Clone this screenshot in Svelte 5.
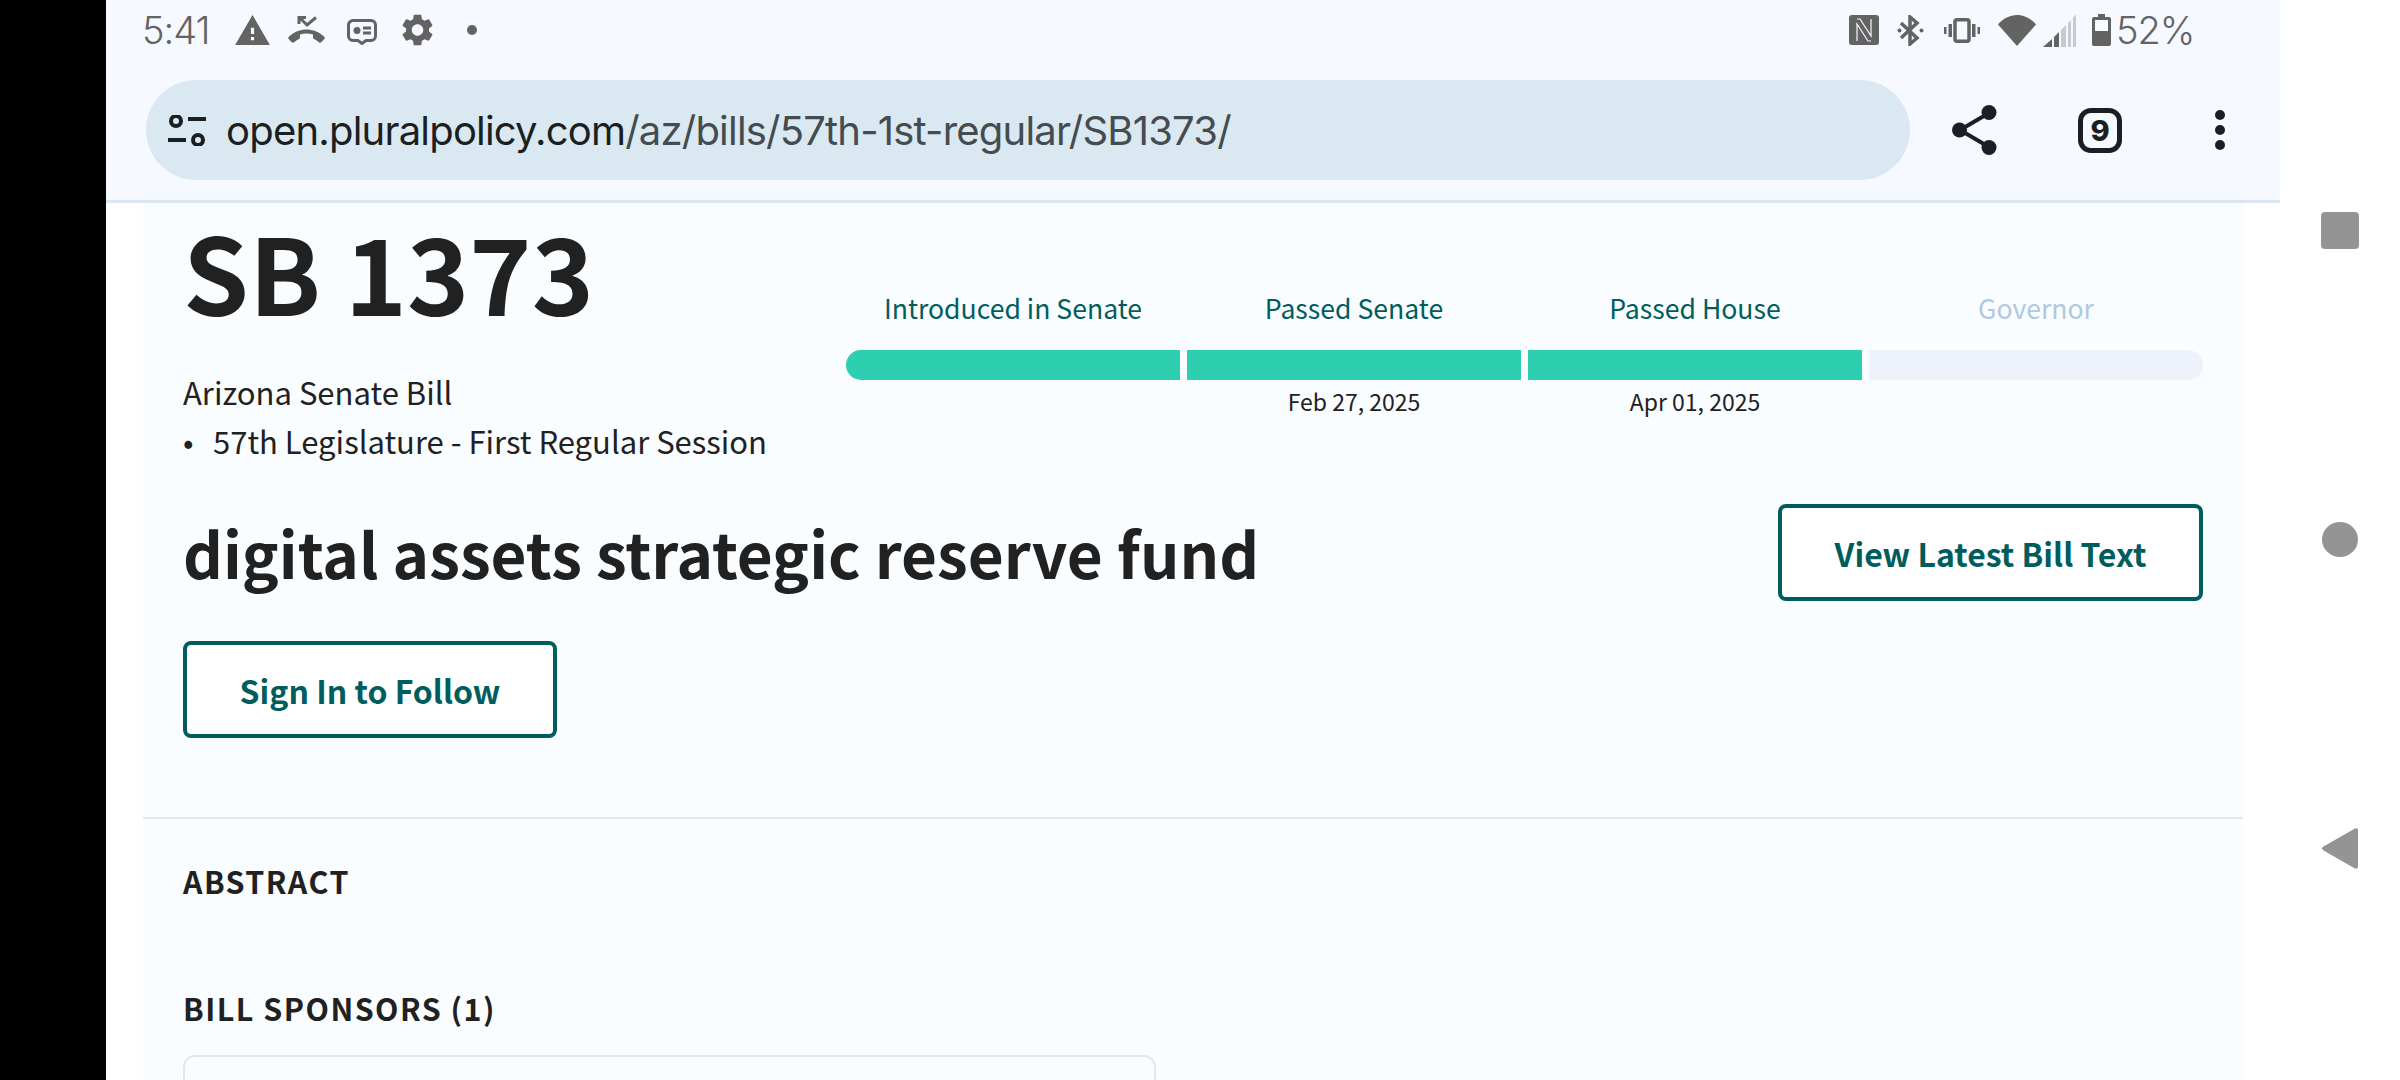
<script>
  const steps = [
    { label: 'Introduced in Senate', date: '', done: true },
    { label: 'Passed Senate', date: 'Feb 27, 2025', done: true },
    { label: 'Passed House', date: 'Apr 01, 2025', done: true },
    { label: 'Governor', date: '', done: false }
  ];
</script>

<div class="screen">
  <div class="bezel"></div>
  <div class="app">
    <header class="chrome">
      <div class="status">
        <span class="clock">5:41</span>
        <svg class="i-warn" viewBox="1 2 22 19"><path d="M1 21h22L12 2 1 21zm12-3h-2v-2h2v2zm0-4h-2v-4h2v4z"/></svg>
        <svg class="i-call" viewBox="0 0 38 28"><path d="M19 13.500C12 13.500 6 16 1 20.500c-1 1-1 2 0 3l2.500 2.500c1 1 2 1 3 0 1.500-1.200 3-2.200 4.500-3 .8-.4 1-1 1-2v-2.500c2-.6 4.300-.9 6.500-.9s4.500.3 6.500.9V21c0 1 .2 1.600 1 2 1.500.8 3 1.800 4.500 3 1 1 2 1 3 0l2.500-2.500c1-1 1-2 0-3-5-4.500-11-7-18-7z"/><path class="line" d="M11 1l8 8L28 1.500M11 8V1.500h7"/></svg>
        <svg class="i-msg" viewBox="0 0 30 26"><path class="line" d="M6 1.500h18a4.500 4.500 0 0 1 4.500 4.500v11a4.500 4.500 0 0 1-4.500 4.500h-5L15 24.500l-4-3H6A4.500 4.500 0 0 1 1.500 17V6A4.500 4.500 0 0 1 6 1.500z"/><circle cx="10" cy="11.500" r="3.500"/><path class="line" d="M16 9h8M16 14h8"/></svg>
        <svg class="i-gear" viewBox="2.400 2 19.200 20"><path d="M19.140 12.940c.04-.3.06-.61.06-.94 0-.32-.02-.64-.07-.94l2.030-1.580c.18-.14.23-.41.12-.61l-1.920-3.320c-.12-.22-.37-.29-.59-.22l-2.390.96c-.5-.38-1.030-.7-1.620-.94l-.36-2.540c-.04-.24-.24-.41-.48-.41h-3.840c-.24 0-.43.17-.47.41l-.36 2.540c-.59.24-1.130.57-1.620.94l-2.390-.96c-.22-.08-.47 0-.59.22L2.740 8.870c-.12.21-.08.47.12.61l2.030 1.580c-.05.3-.09.63-.09.94s.02.64.07.94l-2.030 1.580c-.18.14-.23.41-.12.61l1.920 3.320c.12.22.37.29.59.22l2.390-.96c.5.38 1.030.7 1.620.94l.36 2.540c.05.24.24.41.48.41h3.840c.24 0 .44-.17.47-.41l.36-2.540c.59-.24 1.130-.56 1.620-.94l2.390.96c.22.08.47 0 .59-.22l1.920-3.320c.12-.22.07-.47-.12-.61l-2.010-1.580zM12 15.600c-1.980 0-3.600-1.620-3.600-3.600s1.620-3.600 3.600-3.600 3.600 1.620 3.600 3.600-1.620 3.600-3.600 3.600z"/></svg>
        <span class="dot"></span>
        <span class="spacer"></span>
        <svg class="i-nfc" viewBox="0 0 30 30"><rect width="30" height="30" rx="3"/><path class="nfc-line" d="M8 4h3l11 17V4M22 26h-3L8 9v17"/></svg>
        <svg class="i-bt" viewBox="0 0 27 31"><path class="line thick" d="M4 8l16 15-7 6V2l7 6L4 23"/><circle cx="2.500" cy="15.500" r="2"/><circle cx="24.500" cy="15.500" r="2"/></svg>
        <svg class="i-vib" viewBox="0 0 36 25"><rect class="line thick" x="11" y="1.800" width="14" height="21.400" rx="2"/><rect x="4.500" y="6" width="3.500" height="13"/><rect x="28" y="6" width="3.500" height="13"/><rect x="0" y="9" width="2.500" height="7"/><rect x="33.500" y="9" width="2.500" height="7"/></svg>
        <svg class="i-wifi" viewBox="0 0 38 31"><path d="M19 31L0 9.500C5 3.500 12 0 19 0s14 3.500 19 9.500z"/></svg>
        <svg class="i-sig" viewBox="0 0 33 33"><path d="M0 33l9-8v8z"/><path d="M11 23l5-5v15h-5z"/><path class="dim" d="M18 16l5-5v22h-5zM25 9l3-3v27h-3zM30 4l3-4v33h-3z"/></svg>
        <svg class="i-bat" viewBox="0 0 19 32"><path fill-rule="evenodd" d="M6 0h7v3h4a2 2 0 0 1 2 2v25a2 2 0 0 1-2 2H2a2 2 0 0 1-2-2V5a2 2 0 0 1 2-2h4zM3 6v11h13V6z"/></svg>
        <span class="pct">52%</span>
      </div>
      <div class="urlbar">
        <div class="pill">
          <svg class="i-tune" viewBox="0 0 38 31"><circle class="line2" cx="8" cy="6" r="5"/><path class="bar" d="M20 4h18M0 25h18"/><circle class="line2" cx="30" cy="25" r="5"/></svg>
          <span class="url"><b>open.pluralpolicy.com</b>/az/bills/57th-1st-regular/SB1373/</span>
        </div>
        <svg class="i-share" viewBox="0 0 45 50"><path class="ink-line" d="M37 8L8 25l29 17"/><circle cx="37" cy="7.500" r="7.500"/><circle cx="7.500" cy="25" r="7.500"/><circle cx="37" cy="42.500" r="7.500"/></svg>
        <span class="tabs">9</span>
        <span class="more"><i></i><i></i><i></i></span>
      </div>
    </header>

    <main class="page">
      <div class="card">
        <section class="top">
          <div class="head">
            <div class="id">
              <h1>SB 1373</h1>
              <p class="kind">Arizona Senate Bill</p>
              <p class="session"><span class="bullet">•</span>57th Legislature - First Regular Session</p>
            </div>
            <div class="stepper">
              {#each steps as s}
                <div class="step" class:todo={!s.done}>
                  <div class="label">{s.label}</div>
                  <div class="seg"></div>
                  <div class="date">{s.date}</div>
                </div>
              {/each}
            </div>
          </div>
          <div class="title-row">
            <h2>digital assets strategic reserve fund</h2>
            <button class="btn">View Latest Bill Text</button>
          </div>
          <button class="btn follow">Sign In to Follow</button>
        </section>
        <section class="details">
          <h3 class="abstract">ABSTRACT</h3>
          <h3 class="sponsors">BILL SPONSORS (1)</h3>
          <div class="sponsor-card"></div>
        </section>
      </div>
    </main>
  </div>
  <nav class="sysnav">
    <span class="sq"></span>
    <span class="ci"></span>
    <svg class="tri" viewBox="0 0 36 41"><path d="M33 .5c1.500-.7 3 .3 3 2v36c0 1.700-1.500 2.700-3 2L1.500 22.500c-2-1-2-3 0-4z"/></svg>
  </nav>
</div>

<style>
  :global(body) { margin: 0; background: #fff; }
  .screen { display: flex; width: 2400px; height: 1080px; overflow: hidden; background: #fff; font-family: "Noto Sans CJK JP", "Noto Sans", sans-serif; color: #212121; }
  .bezel { width: 106px; background: #000; flex: none; }
  .app { width: 2174px; flex: none; display: flex; flex-direction: column; }
  .chrome { height: 200px; background: #f6f9ff; border-bottom: 3px solid #dbe5ef; flex: none; }
  .status { height: 60px; display: flex; align-items: center; padding-left: 36px; color: #636363; fill: #636363; }
  .status svg { flex: none; display: block; }
  .clock, .pct { font-family: Inter, sans-serif; font-weight: 300; font-size: 38px; line-height: 60px; }
  .clock { width: 67px; letter-spacing: -1px; white-space: nowrap; }
  .i-warn { width: 35px; height: 30px; margin-left: 26px; }
  .i-call { width: 38px; height: 28px; margin-left: 18px; }
  .i-msg { width: 30px; height: 26px; margin-left: 21px; margin-top: 3px; }
  .i-gear { width: 31px; height: 32px; margin-left: 25px; }
  .dot { width: 10px; height: 10px; border-radius: 50%; background: #636363; margin-left: 34px; }
  .spacer { flex: 1; }
  .i-nfc { width: 30px; height: 30px; }
  .i-bt { width: 27px; height: 31px; margin-left: 18px; }
  .i-vib { width: 36px; height: 25px; margin-left: 20px; }
  .i-wifi { width: 38px; height: 31px; margin-left: 18px; }
  .i-sig { width: 33px; height: 33px; margin-left: 7px; }
  .i-bat { width: 19px; height: 32px; margin-left: 16px; }
  .pct { width: 164px; margin-left: 5px; letter-spacing: -1px; white-space: nowrap; }
  .line { fill: none; stroke: #636363; stroke-width: 3; }
  .thick { stroke-width: 3.5; }
  .nfc-line { fill: none; stroke: #f6f9ff; stroke-width: 1.2; }
  .dim { fill: #c6c9cd; }

  .urlbar { display: flex; align-items: center; height: 100px; margin-top: 20px; padding-left: 40px; color: #1b1f21; }
  .urlbar svg { flex: none; display: block; }
  .pill { width: 1764px; height: 100px; border-radius: 50px; background: #dae8f1; display: flex; align-items: center; padding-left: 22px; box-sizing: border-box; }
  .i-tune { width: 38px; height: 31px; margin-right: 20px; fill: none; }
  .line2 { stroke: #1b1f21; stroke-width: 4; fill: none; }
  .bar { stroke: #1b1f21; stroke-width: 4; }
  .url { font-family: Inter, sans-serif; font-size: 40px; letter-spacing: -0.8px; color: #444c50; white-space: nowrap; }
  .url b { font-weight: 400; color: #1b1f21; }
  .i-share { width: 45px; height: 50px; margin-left: 42px; fill: #1b1f21; }
  .ink-line { fill: none; stroke: #1b1f21; stroke-width: 4; }
  .tabs { width: 44px; height: 45px; margin-left: 81px; box-sizing: border-box; border: 5px solid #1b1f21; border-radius: 13px; display: flex; align-items: center; justify-content: center; font-family: Inter, sans-serif; font-weight: 800; font-size: 29px; line-height: 1; }
  .more { margin-left: 93px; display: flex; flex-direction: column; gap: 5px; }
  .more i { width: 10px; height: 10px; border-radius: 50%; background: #1b1f21; display: block; }

  .page { flex: 1; padding: 0 37px; min-height: 0; }
  .card { background: #fafdff; height: 100%; }
  .top { padding: 0 40px; height: 616px; box-sizing: border-box; border-bottom: 2px solid #dde8f3; }
  .head { display: flex; justify-content: space-between; }
  h1 { margin: 0 0 30px; font-size: 105.6px; line-height: 134px; font-weight: 700; color: #212121; }
  .kind { margin: 0; font-size: 31px; line-height: 49px; }
  .session { margin: 0; display: flex; font-size: 31px; line-height: 49px; }
  .bullet { width: 30px; flex: none; }
  .stepper { width: 1357px; display: flex; gap: 7px; padding-top: 84px; }
  .step { flex: 1; text-align: center; min-width: 0; }
  .label { font-size: 26.6px; line-height: 42px; color: #005d5d; height: 63px; }
  .todo .label { color: #b0c8e0; }
  .seg { height: 30px; background: #2dcfb0; }
  .step:first-child .seg { border-radius: 15px 0 0 15px; }
  .todo .seg { background: #eef2fa; border-radius: 0 15px 15px 0; }
  .date { font-size: 23px; line-height: 42px; color: #212121; }
  .title-row { display: flex; justify-content: space-between; align-items: center; margin-top: 39px; }
  h2 { margin: 0; font-size: 62px; line-height: 97px; font-weight: 700; color: #212121; }
  .btn { width: 425px; height: 97px; box-sizing: border-box; background: #fff; border: 4px solid #005d5d; border-radius: 8px; color: #005d5d; font-family: inherit; font-weight: 700; font-size: 32px; padding: 0; display: block; }
  .follow { width: 374px; margin-top: 40px; }
  .details { padding-left: 40px; }
  h3 { margin: 0; font-size: 30.4px; line-height: 48px; font-weight: 700; letter-spacing: 1.5px; color: #212121; }
  .abstract { margin-top: 38px; }
  .sponsors { margin-top: 79px; }
  .sponsor-card { width: 973px; height: 100px; margin-top: 23px; box-sizing: border-box; border: 2px solid #dde8f3; border-radius: 12px; }

  .sysnav { flex: 1; display: flex; flex-direction: column; align-items: center; padding-top: 212px; }
  .sq { width: 38px; height: 37px; border-radius: 4px; background: #949494; }
  .ci { width: 36px; height: 35px; border-radius: 50%; background: #949494; margin-top: 273px; }
  .tri { width: 36px; height: 41px; fill: #949494; margin-top: 271px; }
</style>
